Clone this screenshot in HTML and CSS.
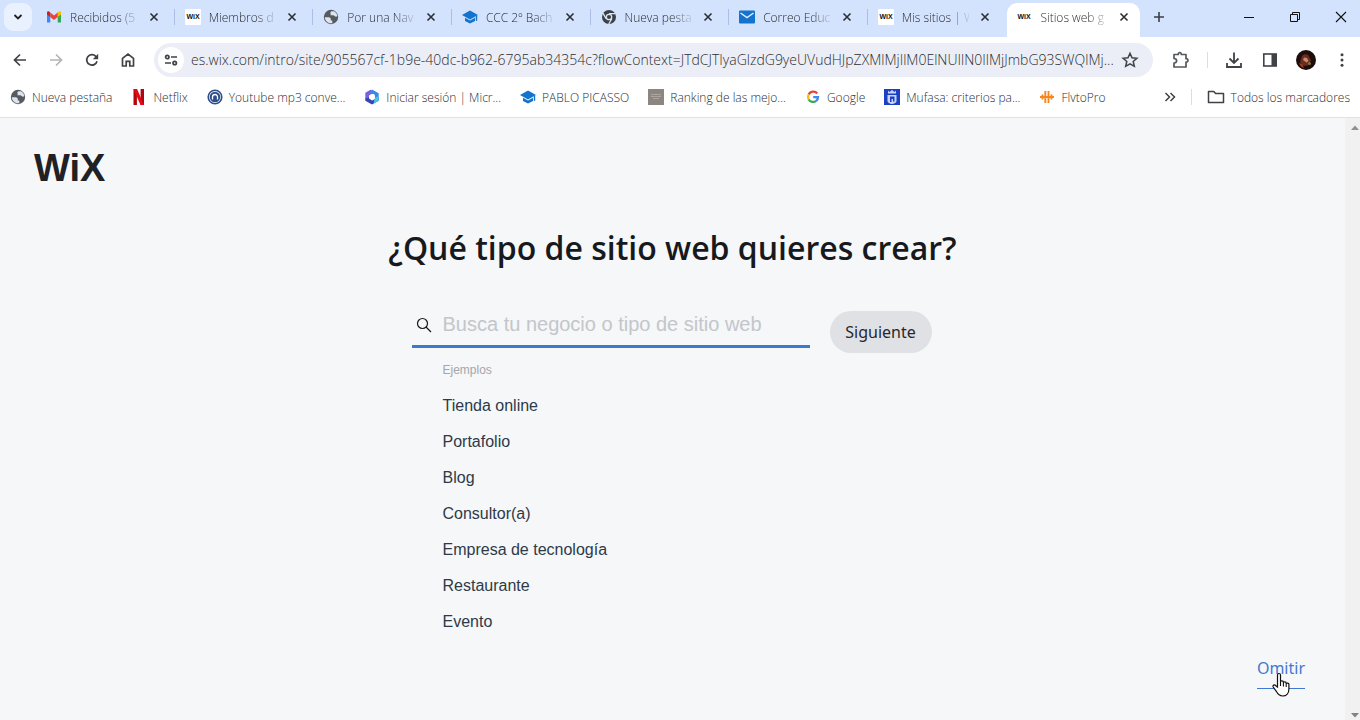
FILE: index.html
```html
<!DOCTYPE html>
<html lang="es">
<head>
<meta charset="utf-8">
<title>Sitios web gratis</title>
<link rel="stylesheet" href="styles.css">
</head>
<body>
<svg class="defs" aria-hidden="true">
  <symbol id="x" viewBox="0 0 10 10"><path d="M1.500 1.500l7 7M8.500 1.500l-7 7" fill="none" stroke="currentColor" stroke-width="1.600"/></symbol>
  <symbol id="globe" viewBox="0 0 16 16"><circle cx="8" cy="8" r="7.200" fill="#565b60"/><path d="M1.800 8.300h3.700c1.500 0 2.300.8 2.300 2v1.200h1.500v2.700C5.200 15 2 12 1.800 8.300zM8.500 2.300h2.300c2 .9 3.300 2.600 3.500 5-.8.500-1.700.5-2.500 0-.5-.7-1-1-1.800-1H7.600V4.800c0-.8-.5-1.200 0-1.800z" fill="#dde4ee"/></symbol>
  <symbol id="cap" viewBox="0 0 16 16"><path d="M8 1.500L16 6 8 10.400 0 6z" fill="#1373ce"/><path d="M3 8.700l5 2.800 5-2.800v3.200L8 14.600l-5-2.700z" fill="#1373ce"/><path d="M14.500 6.800v5" stroke="#1373ce" stroke-width="1.400"/></symbol>
  <symbol id="wix" viewBox="0 0 16 16"><rect width="16" height="16" rx="1" fill="#fff"/><text x="8" y="10" text-anchor="middle" class="wix-mini">WiX</text></symbol>
</svg>

<header class="browser">
  <div class="tabstrip">
    <button class="tab-search" aria-label="Buscar pestañas"><svg width="10" height="10" viewBox="0 0 10 10"><path d="M1.500 3l3.500 3.500L8.500 3" fill="none" stroke="#1f2023" stroke-width="1.800"/></svg></button>
    <nav class="tabs" aria-label="Pestañas">
      <div class="tab"><svg class="fav" viewBox="0 0 16 16"><path d="M1 13.500V4.500L4.300 7v6.500H2z" fill="#4285f4"/><path d="M11.700 7L15 4.500v9h-3.300z" fill="#34a853"/><path d="M11.700 3.600L13 2.600c.9-.6 2 0 2 1.200v1.600L11.700 8z" fill="#fbbc04"/><path d="M1 5.400V3.800c0-1.200 1.100-1.800 2-1.200l1.300 1V8z" fill="#c5221f"/><path d="M4.300 3.600L8 6.500l3.700-2.900V8L8 10.900 4.300 8z" fill="#ea4335"/></svg><span class="label">Recibidos (5</span><button class="close" aria-label="Cerrar"><svg><use href="#x"/></svg></button></div>
      <div class="tab"><svg class="fav"><use href="#wix"/></svg><span class="label">Miembros d</span><button class="close" aria-label="Cerrar"><svg><use href="#x"/></svg></button></div>
      <div class="tab"><svg class="fav"><use href="#globe"/></svg><span class="label">Por una Nav</span><button class="close" aria-label="Cerrar"><svg><use href="#x"/></svg></button></div>
      <div class="tab"><svg class="fav"><use href="#cap"/></svg><span class="label">CCC 2º Bach</span><button class="close" aria-label="Cerrar"><svg><use href="#x"/></svg></button></div>
      <div class="tab"><svg class="fav" viewBox="0 0 16 16"><circle cx="8" cy="8" r="7" fill="#3c4043"/><circle cx="8" cy="8" r="2.700" fill="#3c4043" stroke="#d9e5fb" stroke-width="1.300"/><path d="M8 4.700h6.500M5.100 9.600L1.900 4.200M10.900 9.600L7.700 15" stroke="#d9e5fb" stroke-width="1.300"/></svg><span class="label">Nueva pesta</span><button class="close" aria-label="Cerrar"><svg><use href="#x"/></svg></button></div>
      <div class="tab"><svg class="fav" viewBox="0 0 16 16"><rect y="1.500" width="16" height="13" rx="1" fill="#1373ce"/><path d="M1.500 4L8 8.600 14.500 4" fill="none" stroke="#e6effc" stroke-width="1.400"/></svg><span class="label">Correo Educ</span><button class="close" aria-label="Cerrar"><svg><use href="#x"/></svg></button></div>
      <div class="tab"><svg class="fav"><use href="#wix"/></svg><span class="label">Mis sitios | W</span><button class="close" aria-label="Cerrar"><svg><use href="#x"/></svg></button></div>
      <div class="tab active"><svg class="fav"><use href="#wix"/></svg><span class="label">Sitios web g</span><button class="close" aria-label="Cerrar"><svg><use href="#x"/></svg></button></div>
    </nav>
    <button class="icon-btn" aria-label="Nueva pestaña"><svg width="12" height="12" viewBox="0 0 12 12"><path d="M6 1v10M1 6h10" stroke="#3c4043" stroke-width="1.600"/></svg></button>
    <div class="window-controls">
      <button aria-label="Minimizar"><svg width="12" height="12" viewBox="0 0 12 12"><path d="M1 6.500h10" stroke="#111"/></svg></button>
      <button aria-label="Restaurar"><svg width="12" height="12" viewBox="0 0 12 12"><path d="M1.500 3.500h7v7h-7zM3.500 3.500v-2h7v7h-2" fill="none" stroke="#111"/></svg></button>
      <button aria-label="Cerrar ventana"><svg width="12" height="12" viewBox="0 0 12 12"><path d="M1 1l10 10M11 1L1 11" stroke="#111" stroke-width="1.100"/></svg></button>
    </div>
  </div>

  <div class="toolbar">
    <button class="icon-btn" aria-label="Atrás"><svg width="16" height="16" viewBox="0 0 16 16"><path d="M14 8H3M8 2.500L2.500 8 8 13.500" fill="none" stroke="#3f4246" stroke-width="1.700"/></svg></button>
    <button class="icon-btn" aria-label="Adelante"><svg width="16" height="16" viewBox="0 0 16 16"><path d="M2 8h11M8 2.500L13.500 8 8 13.500" fill="none" stroke="#b3b5b8" stroke-width="1.700"/></svg></button>
    <button class="icon-btn" aria-label="Recargar"><svg width="16" height="16" viewBox="0 0 16 16"><path d="M13 9.200A5.200 5.200 0 1 1 11.800 4.400L13.500 6" fill="none" stroke="#3f4246" stroke-width="1.700"/><path d="M14.200 1.800v5.400H8.800z" fill="#3f4246"/></svg></button>
    <button class="icon-btn" aria-label="Inicio"><svg width="16" height="16" viewBox="0 0 16 16"><path d="M2.500 14V6.300L8 2l5.500 4.300V14H9.800V9.300H6.200V14z" fill="none" stroke="#3f4246" stroke-width="1.700"/></svg></button>
    <div class="omnibox">
      <button class="site-info" aria-label="Información del sitio"><svg width="14" height="14" viewBox="0 0 14 14" fill="none" stroke="#3f4246" stroke-width="1.700"><circle cx="3.300" cy="4" r="1.700"/><path d="M7 4h6M1 10h6"/><circle cx="10.700" cy="10" r="1.700"/></svg></button>
      <input class="url" type="text" aria-label="Dirección" value="es.wix.com/intro/site/905567cf-1b9e-40dc-b962-6795ab34354c?flowContext=JTdCJTIyaGlzdG9yeUVudHJpZXMlMjIlM0ElNUIlN0IlMjJmbG93SWQlMj...">
      <button class="icon-btn" aria-label="Añadir a marcadores"><svg width="18" height="18" viewBox="0 0 18 18"><path d="M9 2.300l2 4.500 4.900.5-3.700 3.200 1.100 4.800L9 12.800l-4.300 2.500 1.100-4.800-3.700-3.200 4.900-.5z" fill="none" stroke="#3f4246" stroke-width="1.500"/></svg></button>
    </div>
    <div class="tools">
      <button class="icon-btn" aria-label="Extensiones"><svg width="20" height="20" viewBox="0 0 20 20"><path d="M3 4.500h4.300c-.2-2.600 3.200-2.600 3 0H15v4.200c2.600-.2 2.600 3.700 0 3.500v4.800H3v-4c3.500-.2 3.500-4.300 0-4.500z" fill="none" stroke="#55585c" stroke-width="1.700" stroke-linejoin="round"/></svg></button>
      <span class="divider"></span>
      <button class="icon-btn" aria-label="Descargas"><svg width="18" height="18" viewBox="0 0 18 18"><path d="M9 1.500v10M4.500 7.500L9 12l4.500-4.500M2 12v4h14v-4" fill="none" stroke="#3f4246" stroke-width="1.800"/></svg></button>
      <button class="icon-btn" aria-label="Panel lateral"><svg width="16" height="16" viewBox="0 0 16 16"><rect x="1.800" y="2" width="12.400" height="12" fill="none" stroke="#3f4246" stroke-width="1.600"/><path d="M9.500 2H14v12H9.500z" fill="#3f4246"/></svg></button>
      <button class="icon-btn" aria-label="Perfil"><svg width="20" height="20" viewBox="0 0 20 20"><circle cx="10" cy="10" r="10" fill="#1d0e0c"/><path d="M6 6c2-2.500 6-2 7 .5l2 4-3 5-5 .5-3-4z" fill="#6d2a1e"/><path d="M8 7.500l3 .5 1.500 3-2 1.500L7 10z" fill="#c98a6b"/><path d="M3 13l3 1 2 4c-2-.5-4-2-5-5z" fill="#a33b22"/><circle cx="13.500" cy="13.500" r="1.500" fill="#7b7a3a"/></svg></button>
      <button class="icon-btn" aria-label="Menú"><svg width="16" height="16" viewBox="0 0 16 16" fill="#3f4246"><circle cx="8" cy="2.800" r="1.500"/><circle cx="8" cy="8" r="1.500"/><circle cx="8" cy="13.200" r="1.500"/></svg></button>
    </div>
  </div>

  <nav class="bookmarks" aria-label="Marcadores">
    <a href="#"><svg class="fav"><use href="#globe"/></svg>Nueva pestaña</a>
    <a href="#"><svg class="fav" viewBox="0 0 16 16"><path d="M2.500 0h3.400v16H2.500zM9.600 0H13v16H9.600z" fill="#b1060f"/><path d="M2.500 0h3.600L13 16H9.500z" fill="#e50914"/></svg>Netflix</a>
    <a href="#"><svg class="fav" viewBox="0 0 16 16"><circle cx="8" cy="8" r="6.800" fill="#fff" stroke="#2f4f8c" stroke-width="1.600"/><circle cx="8" cy="8" r="5.300" fill="#2f4f8c"/><path d="M5.500 10.500V8a2.500 2.500 0 0 1 5 0v2.500" fill="none" stroke="#fff" stroke-width="1.300"/></svg>Youtube mp3 conve...</a>
    <a href="#"><svg class="fav" viewBox="0 0 16 16"><path d="M6.500.8L1.300 3.800v6.500l3.500 2 1.500-6.500 6-2.500z" fill="#7b62d8"/><path d="M8 .5l6.700 3.700v5L10.500 10V5.600L6 3.600z" fill="#3a8be0"/><path d="M1.300 9.500l4-1 2.700 3 6.700-3.500v3.800L8 15.500l-6.700-3.700z" fill="#3546b5"/><path d="M10.500 9l4.200-2v4.800l-5 2.700z" fill="#4ac3e8"/><path d="M8 5l3 1.500v3L8 11.200 5 9.500v-3z" fill="#fff"/></svg>Iniciar sesión | Micr...</a>
    <a href="#"><svg class="fav"><use href="#cap"/></svg>PABLO PICASSO</a>
    <a href="#"><svg class="fav" viewBox="0 0 16 16"><rect width="16" height="16" fill="#8d8580"/><path d="M3 5.500h10M3 7.500h10M5 9.500h6" stroke="#aaa39e"/></svg>Ranking de las mejo...</a>
    <a href="#"><svg class="fav" viewBox="0 0 16 16" fill="none" stroke-width="2.300"><path d="M12.200 4.500A5 5 0 0 0 3.700 5.500" stroke="#ea4335"/><path d="M3.700 5.500a5 5 0 0 0 0 5" stroke="#fbbc04"/><path d="M3.700 10.500a5 5 0 0 0 7.500 1.300" stroke="#34a853"/><path d="M11.200 11.800C12.500 10.700 13 9.500 13 8.200H8.200" stroke="#4285f4"/></svg>Google</a>
    <a href="#"><svg class="fav" viewBox="0 0 16 16"><rect width="16" height="16" fill="#1c3fc4"/><path d="M4 1.500l1.500 1.500L8 1l2.500 2L12 1.500v3H4zM3.500 6h9v6c0 2-3 3-4.500 3s-4.500-1-4.500-3z" fill="#c8d4f8"/><path d="M6 7.500h4.500v5H9V10H7.500v3H6z" fill="#1c3fc4"/></svg>Mufasa: criterios pa...</a>
    <a href="#"><svg class="fav" viewBox="0 0 16 16"><path d="M1 8h14M3.500 5.500v5M6.300 2v12M9.500 2v12M12.500 5.500v5" stroke="#f5871f" stroke-width="1.900"/></svg>FlvtoPro</a>
    <div class="bookmarks-end">
      <button class="more" aria-label="Más marcadores"><svg width="12" height="10" viewBox="0 0 12 10"><path d="M1.500 1l4 4-4 4M6.500 1l4 4-4 4" fill="none" stroke="#3f4246" stroke-width="1.500"/></svg></button>
      <span class="divider"></span>
      <a href="#"><svg class="folder" viewBox="0 0 18 14"><path d="M1.500 1.500h5.300l1.800 2h7.900v9H1.500z" fill="none" stroke="#3f4246" stroke-width="1.500" stroke-linejoin="round"/></svg>Todos los marcadores</a>
    </div>
  </nav>
</header>

<div class="viewport">
  <main class="page">
    <a class="logo" href="#">WiX</a>
    <h1>¿Qué tipo de sitio web quieres crear?</h1>
    <form class="search">
      <div class="column">
        <label class="field"><svg width="16" height="18" viewBox="0 0 16 18"><circle cx="6.500" cy="8.500" r="5" fill="none" stroke="#17191c" stroke-width="1.200"/><path d="M10 12l5 5" stroke="#17191c" stroke-width="1.300"/></svg><input type="text" placeholder="Busca tu negocio o tipo de sitio web" aria-label="Tipo de sitio web"></label>
        <div class="examples">
          <h2>Ejemplos</h2>
          <ul>
            <li><a href="#">Tienda online</a></li>
            <li><a href="#">Portafolio</a></li>
            <li><a href="#">Blog</a></li>
            <li><a href="#">Consultor(a)</a></li>
            <li><a href="#">Empresa de tecnología</a></li>
            <li><a href="#">Restaurante</a></li>
            <li><a href="#">Evento</a></li>
          </ul>
        </div>
      </div>
      <button class="next" type="button">Siguiente</button>
    </form>
    <footer>
      <a class="skip" href="#">Omitir<svg class="cursor" width="20" height="26" viewBox="0 0 20 26" aria-hidden="true"><path d="M6.500 15V3c0-2 3-2 3 0v7c0-1.700 2.900-1.500 2.900.2v.8c0-1.600 2.800-1.400 2.800.2v.8c0-1.400 2.700-1.200 2.700.3V17c0 4-2.400 7-6.200 7-3.500 0-5-2-6.400-4.700L2.200 15c-1-1.800 1.300-2.800 2.600-1.300z" fill="#fff" stroke="#111" stroke-width="1.200"/><path d="M9.500 10v4M12.400 11v3.500M15.200 12v3" stroke="#111" stroke-width="1.100"/></svg></a>
    </footer>
  </main>
  <div class="scrollbar" aria-hidden="true">
    <svg width="8" height="5" viewBox="0 0 8 5"><path d="M0 5l4-4.500L8 5z" fill="#8f9193"/></svg>
    <svg width="8" height="5" viewBox="0 0 8 5"><path d="M0 0l4 4.500L8 0z" fill="#7f8183"/></svg>
  </div>
</div>
</body>
</html>
```
FILE: styles.css
```css
* { box-sizing: border-box; }

body {
  margin: 0;
  min-height: 100vh;
  display: flex;
  flex-direction: column;
  font-family: "Open Sans", "Noto Sans", sans-serif;
  font-size: 12px;
  font-weight: 300;
  color: #2b2e32;
  background: #f5f7f9;
}

button {
  display: flex;
  align-items: center;
  justify-content: center;
  padding: 0;
  border: 0;
  background: none;
  color: inherit;
  font: inherit;
}

a { color: inherit; text-decoration: none; }
input { border: 0; outline: 0; background: none; padding: 0; min-width: 0; }

.defs { display: none; }
.wix-mini { font: 700 7px "Liberation Sans", sans-serif; fill: #111; }
.fav { width: 16px; height: 16px; flex: none; }
.icon-btn { width: 28px; height: 28px; flex: none; }
.divider { width: 1px; height: 16px; background: #d5deee; }

.browser { background: #fff; border-bottom: 1px solid #dfe1e4; }

.tabstrip {
  display: flex;
  align-items: center;
  height: 37px;
  padding: 0 1px 3px 4px;
  background: #d3e2fd;
}
.tab-search { width: 28px; height: 28px; border-radius: 9px; background: #e9f1fe; flex: none; }
.tabs { display: flex; flex: 0 1 1109px; min-width: 0; margin-left: 4px; }
.tab {
  position: relative;
  display: flex;
  align-items: center;
  flex: 1 1 0;
  min-width: 0;
  height: 34px;
  padding: 0 13px 0 10px;
}
.tab:not(.active)::after {
  content: "";
  position: absolute;
  right: 0;
  top: 9px;
  width: 1px;
  height: 16px;
  background: #a9bfe6;
}
.tab:nth-last-child(2)::after { display: none; }
.tab.active::before {
  content: "";
  position: absolute;
  left: 1px;
  right: 5px;
  top: 3px;
  bottom: -3px;
  border-radius: 10px 10px 0 0;
  background: #fff;
}
.tab > * { position: relative; }
.label {
  flex: 1 1 0;
  min-width: 0;
  margin: 0 8px;
  white-space: nowrap;
  mask-image: linear-gradient(to right, #000 70%, #0002);
}
.close { width: 16px; height: 16px; flex: none; }
.close svg { width: 10px; height: 10px; }
.window-controls { display: flex; gap: 10px; margin-left: auto; }
.window-controls button { width: 36px; height: 28px; }

.toolbar { display: flex; align-items: center; gap: 8px; height: 45px; padding: 0 4px 0 6px; }
.omnibox {
  display: flex;
  align-items: center;
  flex: 1;
  height: 34px;
  margin-left: 4px;
  padding: 0 9px 0 4px;
  border-radius: 17px;
  background: #ebeef6;
}
.site-info { width: 26px; height: 26px; border-radius: 50%; background: #fff; flex: none; }
.url { flex: 1; margin-left: 7px; font: 300 14px "Open Sans", sans-serif; color: #2b2e32; }
.tools { display: flex; align-items: center; gap: 8px; margin-left: 6px; }
.tools .divider { margin: 0 4px; }

.bookmarks { display: flex; align-items: center; gap: 19px; height: 35px; padding: 0 10px 5px; white-space: nowrap; }
.bookmarks a { display: flex; align-items: center; gap: 6px; }
.bookmarks-end { display: flex; align-items: center; gap: 15px; margin-left: auto; }
.folder { width: 18px; height: 14px; }

.viewport { display: flex; flex: 1; }
.page { flex: 1; display: flex; flex-direction: column; padding: 30px 40px 0 34px; }
.logo { font: 700 38px/40px "Liberation Sans", sans-serif; color: #202124; }
h1 {
  margin: 38px 0 0 6px;
  font: 600 32px/44px "Open Sans", sans-serif;
  text-align: center;
  color: #17191c;
}
.search { display: flex; justify-content: center; align-items: flex-start; gap: 20px; margin: 35px 0 0 4px; }
.column { width: 398px; }
.field { display: flex; align-items: center; gap: 11px; height: 43px; padding: 0 4px 2px; border-bottom: 3px solid #3d79d2; }
.field input { flex: 1; font: 20px "Liberation Sans", sans-serif; color: #17191c; }
.field input::placeholder { color: #c3c6ca; opacity: 1; }
.next {
  min-width: 102px;
  height: 42px;
  margin-top: 6px;
  border-radius: 21px;
  background: #e0e1e5;
  font: 16px "Noto Sans", sans-serif;
  color: #26282b;
}
.examples { padding: 14px 0 0 31px; font-family: "Liberation Sans", sans-serif; font-weight: 400; }
h2 { margin: 0; font-size: 12px; line-height: 16px; font-weight: 400; color: #a3a6ab; }
ul { margin: 10px 0 0; padding: 0; list-style: none; }
li { font-size: 16px; line-height: 36px; color: #2e3a48; }

footer { display: flex; justify-content: flex-end; margin-top: 16px; }
.skip { position: relative; padding-bottom: 8px; border-bottom: 1px solid #3d79d2; font: 16px/24px "Noto Sans", sans-serif; color: #4678d3; }
.cursor { position: absolute; left: 14px; top: 16px; }

.scrollbar {
  display: flex;
  flex-direction: column;
  justify-content: space-between;
  align-items: flex-end;
  width: 15px;
  padding: 7px 1px 2px 0;
  background: #f1f1f1;
}
```
